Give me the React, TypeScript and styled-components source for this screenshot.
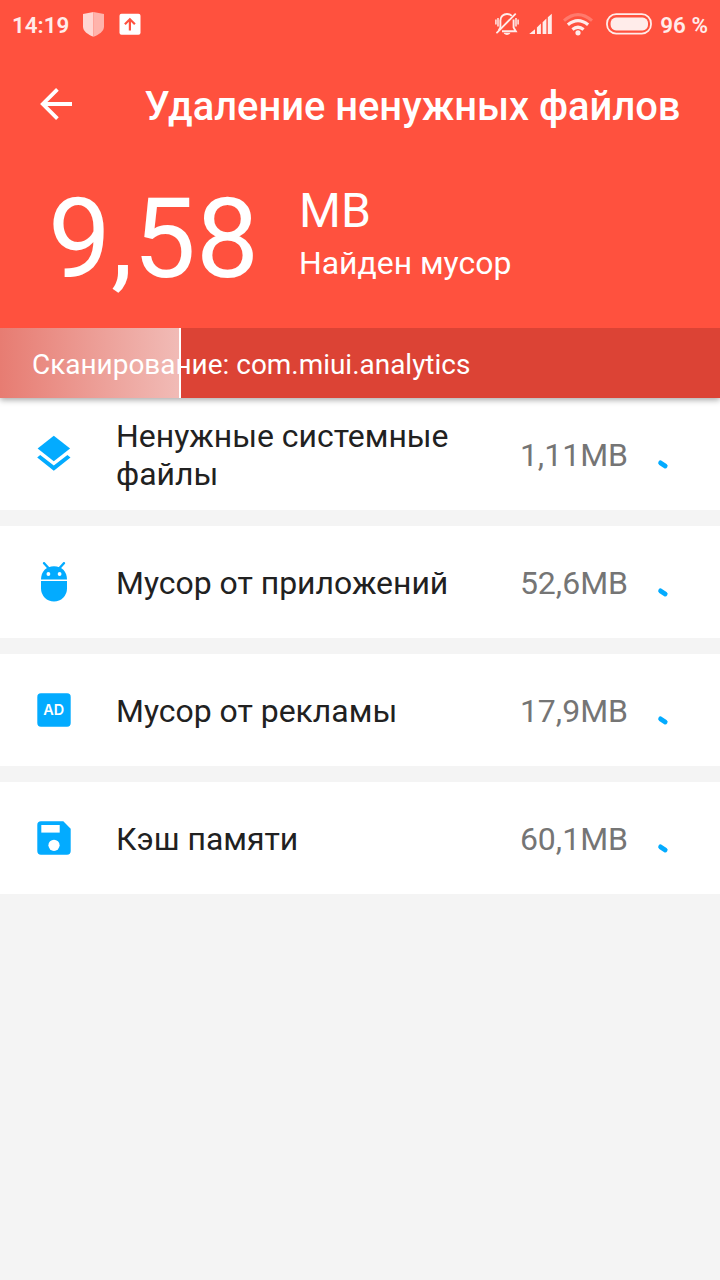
import React from 'react';
import styled, { createGlobalStyle } from 'styled-components';

const GlobalStyle = createGlobalStyle`
  * { box-sizing: border-box; }
  body {
    margin: 0;
    background: #f4f4f4;
    font-family: Roboto, "Noto Sans", sans-serif;
  }
`;

const Screen = styled.main`
  width: 720px;
  min-height: 1280px;
  background: #f4f4f4;
  display: flex;
  flex-direction: column;
`;

const Header = styled.header`
  background: #ff513e;
  color: #fff;
  position: relative;
  box-shadow: 0 2px 6px rgba(0, 0, 0, 0.35);
`;

const StatusBar = styled.div`
  height: 48px;
  padding: 0 12px;
  display: flex;
  align-items: center;
  justify-content: space-between;
  color: #ffecea;
`;

const StatusGroup = styled.div`
  display: flex;
  align-items: center;
`;

const StatusText = styled.span<{ $gap?: number }>`
  font-size: 22.4px;
  font-weight: 600;
  line-height: 46px;
  padding-top: 2px;
  white-space: nowrap;
  margin-left: ${(p) => p.$gap ?? 0}px;
`;

const StatusIcon = styled.svg<{ $gap: number }>`
  display: block;
  flex: none;
  margin-left: ${(p) => p.$gap}px;
`;

const TitleBar = styled.div`
  height: 112px;
  display: flex;
  align-items: center;
  padding: 6px 0 0 40px;
`;

const BackIcon = styled.svg`
  display: block;
  flex: none;
  margin: -7px 72.5px 0 0;
`;

const Title = styled.h1`
  margin: 0;
  font-size: 39.9px;
  font-weight: 500;
  line-height: 48px;
  white-space: nowrap;
`;

const Summary = styled.section`
  height: 168px;
  padding-left: 48px;
  display: flex;
  align-items: flex-start;
`;

const Amount = styled.div`
  width: 251px;
  font-size: 112px;
  line-height: 132px;
  padding-top: 13px;
  white-space: nowrap;
`;

const SummaryInfo = styled.div`
  padding-top: 23px;
`;

const Unit = styled.div`
  font-size: 48px;
  line-height: 56px;
`;

const Caption = styled.div`
  font-size: 31.9px;
  line-height: 38px;
  margin-top: 5px;
`;

const ScanBar = styled.div`
  height: 70px;
  padding: 2px 0 0 32px;
  display: flex;
  align-items: center;
  background: linear-gradient(90deg, #e77c72, #f1bbb6) 0 0 / 179px 100% no-repeat,
    linear-gradient(#fff, #fff) 179px 0 / 2px 100% no-repeat, #dc4335;
  font-size: 27.95px;
  white-space: nowrap;
`;

const List = styled.ul`
  list-style: none;
  margin: 0;
  padding: 0;
  display: flex;
  flex-direction: column;
  gap: 16px;
`;

const Row = styled.li`
  height: 112px;
  background: #fff;
  display: flex;
  align-items: center;
  padding: 0 50px 0 34px;
`;

const RowIcon = styled.svg`
  display: block;
  flex: none;
  margin-right: 42px;
`;

const RowLabel = styled.span`
  flex: 1;
  color: #212121;
  font-size: 31.95px;
  line-height: 38px;
  padding-top: 2px;
`;

const RowSize = styled.span`
  color: #757575;
  font-size: 32px;
  line-height: 38px;
  padding-top: 2px;
  margin-left: 24px;
`;

const Spinner = styled.svg`
  display: block;
  flex: none;
  margin-left: 28px;
`;

const BLUE = '#03abff';

const LayersIcon = () => (
  <RowIcon width="40" height="40" viewBox="0 0 40 40" fill={BLUE}>
    <path d="M19.8 1.8 36.1 14.5 19.8 27.2 3.6 14.5Z" />
    <path d="M6.2 21.1 19.8 31.6 33.4 21.1 36.5 23.5 19.8 36.7 3.2 23.5Z" />
  </RowIcon>
);

const AndroidIcon = () => (
  <RowIcon width="40" height="40" viewBox="0 0 40 40" fill={BLUE}>
    <path d="M7 17.6C7 9.4 12.4 4.2 20 4.2S33 9.4 33 17.6Z" />
    <path d="M7 19H33V26.6a13 13 0 0 1-26 0Z" />
    <path d="M10.1 1.2 14.4 6M29.9 1.2 25.6 6" stroke={BLUE} strokeWidth="2.4" strokeLinecap="round" />
    <circle cx="14.4" cy="12" r="1.9" fill="#fff" />
    <circle cx="25.6" cy="12" r="1.9" fill="#fff" />
  </RowIcon>
);

const AdIcon = () => (
  <RowIcon width="40" height="40" viewBox="0 0 40 40">
    <rect x="3.3" y="3.3" width="33.4" height="33.4" rx="3.6" fill={BLUE} />
    <text x="19.6" y="25.4" textAnchor="middle" fill="#fff" fontFamily="Inter, sans-serif" fontWeight="600" fontSize="14.4">
      AD
    </text>
  </RowIcon>
);

const SaveIcon = () => (
  <RowIcon width="40" height="40" viewBox="0 0 40 40">
    <path d="M7 3.3H29.3L36.7 10.7V33a3.7 3.7 0 0 1-3.7 3.7H7A3.7 3.7 0 0 1 3.3 33V7A3.7 3.7 0 0 1 7 3.3Z" fill={BLUE} />
    <path d="M7.3 7H25.7V14.6H7.3Z" fill="#fff" />
    <circle cx="20" cy="27.3" r="5.6" fill="#fff" />
  </RowIcon>
);

const rows = [
  { icon: <LayersIcon />, label: 'Ненужные системные файлы', size: '1,11MB' },
  { icon: <AndroidIcon />, label: 'Мусор от приложений', size: '52,6MB' },
  { icon: <AdIcon />, label: 'Мусор от рекламы', size: '17,9MB' },
  { icon: <SaveIcon />, label: 'Кэш памяти', size: '60,1MB' },
];

export default function App() {
  return (
    <>
      <GlobalStyle />
      <Screen>
        <Header>
          <StatusBar>
            <StatusGroup>
              <StatusText>14:19</StatusText>
              <StatusIcon $gap={14.2} width="21" height="26" viewBox="0 0 21 26">
                <path d="M10.5.9 0 3.1V15.5c0 5 5 8 10.5 10.3Z" fill="#ffd6d2" />
                <path d="M10.5.9 21 3.1V15.5c0 5-5 8-10.5 10.3Z" fill="#ffb3ab" />
              </StatusIcon>
              <StatusIcon $gap={14.8} width="22" height="22" viewBox="0 0 22 22">
                <rect x=".5" y=".8" width="21" height="21" rx="2" fill="#fff" />
                <path d="M10.9 17.6V6.4M5.9 11.2 10.9 6.2l5 5" fill="none" stroke="#ff513e" strokeWidth="2.2" />
              </StatusIcon>
            </StatusGroup>
            <StatusGroup>
              <StatusIcon $gap={0} width="24" height="24" viewBox="0 0 24 24" fill="none" stroke="#ffecea" strokeWidth="1.9">
                <path d="M3.8 18.2 5.4 15.6V8.6C5.4 4.6 8.4 2 12 2c2 0 3.6.7 4.8 1.9M18.6 7.4v8.2l2.2 3.6H7" />
                <path d="M2 20.6 20.2 2.2" strokeLinecap="round" />
                <path d="M.9 7.5v5M3 6v8.4M21 6v8.4M23.1 7.5v5" strokeWidth="1.5" />
                <path d="M8.6 20.8h6.8c-.8 2.8-6 2.8-6.8 0Z" fill="#ffecea" stroke="none" />
              </StatusIcon>
              <StatusIcon $gap={10} width="23" height="22" viewBox="0 0 23 22" fill="#ffecea">
                <path d="M.2 21 6 16.2V21ZM7.9 14.4 11.9 10.6V21H7.9ZM13.6 9.2 17.4 5.6V21H13.6ZM18.8 4.2 22.8.8V21H18.8Z" />
              </StatusIcon>
              <StatusIcon $gap={11} width="30" height="24" viewBox="0 0 30 24" fill="none" stroke="#ffecea" strokeWidth="3.2">
                <path d="M1 8.6Q15-3.4 29 8.6" stroke="#ff7a6c" strokeWidth="3" />
                <path d="M4.9 12.8Q15 4.4 25.1 12.8M9.4 17.5Q15 13 20.6 17.5" />
                <circle cx="15" cy="20.8" r="2.6" fill="#ffecea" stroke="none" />
              </StatusIcon>
              <StatusIcon $gap={13} width="46" height="22" viewBox="0 0 46 22">
                <rect x="1" y="1.2" width="44" height="19.4" rx="9.2" fill="none" stroke="#ffecea" strokeWidth="1.8" />
                <rect x="4.6" y="4.6" width="37.4" height="12.8" rx="5.4" fill="#ffecea" />
              </StatusIcon>
              <StatusText $gap={8.2}>96 %</StatusText>
            </StatusGroup>
          </StatusBar>
          <TitleBar>
            <BackIcon width="32" height="32" viewBox="0 0 32 32" fill="none" stroke="#fff" strokeWidth="3.8">
              <path d="M32 16H3M17.4 1.4 2.8 16 17.4 30.6" />
            </BackIcon>
            <Title>Удаление ненужных файлов</Title>
          </TitleBar>
          <Summary>
            <Amount>9,58</Amount>
            <SummaryInfo>
              <Unit>MB</Unit>
              <Caption>Найден мусор</Caption>
            </SummaryInfo>
          </Summary>
          <ScanBar>Сканирование: com.miui.analytics</ScanBar>
        </Header>
        <List>
          {rows.map((row) => (
            <Row key={row.label}>
              {row.icon}
              <RowLabel>{row.label}</RowLabel>
              <RowSize>{row.size}</RowSize>
              <Spinner width="14" height="32" viewBox="0 0 14 32">
                <path d="M4.6 24.9 9.2 28" fill="none" stroke={BLUE} strokeWidth="4.8" strokeLinecap="round" />
              </Spinner>
            </Row>
          ))}
        </List>
      </Screen>
    </>
  );
}
